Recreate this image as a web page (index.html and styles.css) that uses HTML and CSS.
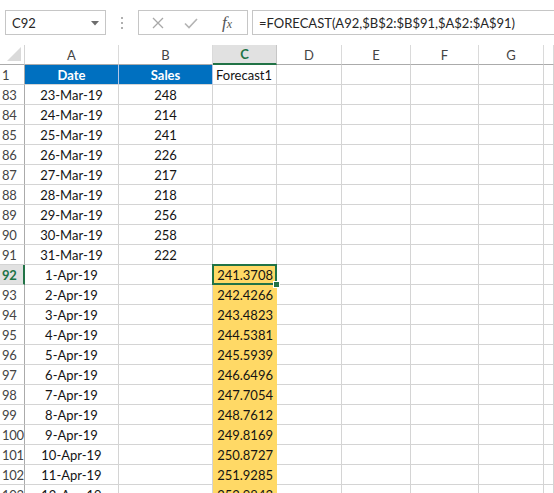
FILE: index.html
```html
<!DOCTYPE html>
<html>
<head>
<meta charset="utf-8">
<link rel="stylesheet" href="styles.css">
</head>
<body>
<div class="app">
  <div class="toolbar">
    <div class="namebox">
      <span class="ref">C92</span>
      <svg class="drop" width="8" height="5" viewBox="0 0 8 5"><path d="M0 0H8L4 4.5Z" fill="#6d6d6d"/></svg>
    </div>
    <svg class="grip" width="3" height="14" viewBox="0 0 3 14"><rect x="0" y="1" width="2" height="2" fill="#b0b0b0"/><rect x="0" y="6" width="2" height="2" fill="#b0b0b0"/><rect x="0" y="11" width="2" height="2" fill="#b0b0b0"/></svg>
    <div class="fbtns">
      <svg class="ic" width="12" height="12" viewBox="0 0 12 12"><path d="M1 1L11 11M11 1L1 11" stroke="#a8a8a8" stroke-width="1.3"/></svg>
      <svg class="ic" width="14" height="12" viewBox="0 0 14 12"><path d="M1 6.5L5 10.5L13 2" stroke="#b4b4b4" stroke-width="1.6" fill="none"/></svg>
      <span class="fx">f<span class="x">x</span></span>
    </div>
    <div class="formula">=FORECAST(A92,$B$2:$B$91,$A$2:$A$91)</div>
  </div>
  <div class="grid">
    <div class="cell corner"><svg width="14" height="14" viewBox="0 0 14 14"><path d="M14 0V14H0Z" fill="#dadada"/></svg></div>
    <div class="cell ch">A</div>
    <div class="cell ch">B</div>
    <div class="cell ch sel">C</div>
    <div class="cell ch">D</div>
    <div class="cell ch">E</div>
    <div class="cell ch">F</div>
    <div class="cell ch">G</div>
    <div class="cell ch"></div>

    <div class="cell rh">1</div>
    <div class="cell hd">Date</div>
    <div class="cell hd">Sales</div>
    <div class="cell left">Forecast1</div>
    <div class="cell"></div><div class="cell"></div><div class="cell"></div><div class="cell"></div><div class="cell"></div>

    <div class="cell rh">83</div><div class="cell c">23-Mar-19</div><div class="cell c">248</div><div class="cell"></div><div class="cell"></div><div class="cell"></div><div class="cell"></div><div class="cell"></div><div class="cell"></div>
    <div class="cell rh">84</div><div class="cell c">24-Mar-19</div><div class="cell c">214</div><div class="cell"></div><div class="cell"></div><div class="cell"></div><div class="cell"></div><div class="cell"></div><div class="cell"></div>
    <div class="cell rh">85</div><div class="cell c">25-Mar-19</div><div class="cell c">241</div><div class="cell"></div><div class="cell"></div><div class="cell"></div><div class="cell"></div><div class="cell"></div><div class="cell"></div>
    <div class="cell rh">86</div><div class="cell c">26-Mar-19</div><div class="cell c">226</div><div class="cell"></div><div class="cell"></div><div class="cell"></div><div class="cell"></div><div class="cell"></div><div class="cell"></div>
    <div class="cell rh">87</div><div class="cell c">27-Mar-19</div><div class="cell c">217</div><div class="cell"></div><div class="cell"></div><div class="cell"></div><div class="cell"></div><div class="cell"></div><div class="cell"></div>
    <div class="cell rh">88</div><div class="cell c">28-Mar-19</div><div class="cell c">218</div><div class="cell"></div><div class="cell"></div><div class="cell"></div><div class="cell"></div><div class="cell"></div><div class="cell"></div>
    <div class="cell rh">89</div><div class="cell c">29-Mar-19</div><div class="cell c">256</div><div class="cell"></div><div class="cell"></div><div class="cell"></div><div class="cell"></div><div class="cell"></div><div class="cell"></div>
    <div class="cell rh">90</div><div class="cell c">30-Mar-19</div><div class="cell c">258</div><div class="cell"></div><div class="cell"></div><div class="cell"></div><div class="cell"></div><div class="cell"></div><div class="cell"></div>
    <div class="cell rh">91</div><div class="cell c">31-Mar-19</div><div class="cell c">222</div><div class="cell"></div><div class="cell"></div><div class="cell"></div><div class="cell"></div><div class="cell"></div><div class="cell"></div>

    <div class="cell rh rsel">92</div><div class="cell c">1-Apr-19</div><div class="cell"></div><div class="cell fc active">241.3708</div><div class="cell"></div><div class="cell"></div><div class="cell"></div><div class="cell"></div><div class="cell"></div>
    <div class="cell rh">93</div><div class="cell c">2-Apr-19</div><div class="cell"></div><div class="cell fc">242.4266</div><div class="cell"></div><div class="cell"></div><div class="cell"></div><div class="cell"></div><div class="cell"></div>
    <div class="cell rh">94</div><div class="cell c">3-Apr-19</div><div class="cell"></div><div class="cell fc">243.4823</div><div class="cell"></div><div class="cell"></div><div class="cell"></div><div class="cell"></div><div class="cell"></div>
    <div class="cell rh">95</div><div class="cell c">4-Apr-19</div><div class="cell"></div><div class="cell fc">244.5381</div><div class="cell"></div><div class="cell"></div><div class="cell"></div><div class="cell"></div><div class="cell"></div>
    <div class="cell rh">96</div><div class="cell c">5-Apr-19</div><div class="cell"></div><div class="cell fc">245.5939</div><div class="cell"></div><div class="cell"></div><div class="cell"></div><div class="cell"></div><div class="cell"></div>
    <div class="cell rh">97</div><div class="cell c">6-Apr-19</div><div class="cell"></div><div class="cell fc">246.6496</div><div class="cell"></div><div class="cell"></div><div class="cell"></div><div class="cell"></div><div class="cell"></div>
    <div class="cell rh">98</div><div class="cell c">7-Apr-19</div><div class="cell"></div><div class="cell fc">247.7054</div><div class="cell"></div><div class="cell"></div><div class="cell"></div><div class="cell"></div><div class="cell"></div>
    <div class="cell rh">99</div><div class="cell c">8-Apr-19</div><div class="cell"></div><div class="cell fc">248.7612</div><div class="cell"></div><div class="cell"></div><div class="cell"></div><div class="cell"></div><div class="cell"></div>
    <div class="cell rh">100</div><div class="cell c">9-Apr-19</div><div class="cell"></div><div class="cell fc">249.8169</div><div class="cell"></div><div class="cell"></div><div class="cell"></div><div class="cell"></div><div class="cell"></div>
    <div class="cell rh">101</div><div class="cell c">10-Apr-19</div><div class="cell"></div><div class="cell fc">250.8727</div><div class="cell"></div><div class="cell"></div><div class="cell"></div><div class="cell"></div><div class="cell"></div>
    <div class="cell rh">102</div><div class="cell c">11-Apr-19</div><div class="cell"></div><div class="cell fc">251.9285</div><div class="cell"></div><div class="cell"></div><div class="cell"></div><div class="cell"></div><div class="cell"></div>
    <div class="cell rh">103</div><div class="cell c">12-Apr-19</div><div class="cell"></div><div class="cell fc">252.9843</div><div class="cell"></div><div class="cell"></div><div class="cell"></div><div class="cell"></div><div class="cell"></div>
  </div>
</div>
</body>
</html>
```

FILE: styles.css
```css
html, body {
  margin: 0;
  padding: 0;
  background: #ffffff;
}
body {
  width: 554px;
  height: 493px;
  overflow: hidden;
  font-family: Lato, "Liberation Sans", sans-serif;
  font-size: 13px;
  color: #141414;
}
.app {
  display: flex;
  flex-direction: column;
  width: 554px;
  height: 493px;
  overflow: hidden;
}
.toolbar {
  height: 45px;
  flex: none;
  display: flex;
  align-items: flex-start;
  padding-top: 10px;
  padding-left: 5px;
  box-sizing: border-box;
}
.namebox {
  width: 101px;
  height: 25px;
  box-sizing: border-box;
  border: 1px solid #c6c6c6;
  display: flex;
  align-items: center;
  justify-content: space-between;
  padding: 0 6px 0 6px;
  font-size: 13px;
  color: #262626;
}
.drop { margin-top: 1px; }
.grip {
  margin: 6px 0 0 15px;
}
.fbtns {
  margin-left: 14px;
  width: 110px;
  height: 25px;
  box-sizing: border-box;
  border: 1px solid #c6c6c6;
  display: flex;
  align-items: center;
  padding-left: 13px;
  gap: 22px;
}
.fbtns .ic:nth-child(2) { margin-left: -2px; }
.fx {
  font-family: "Liberation Serif", serif;
  font-style: italic;
  font-size: 17px;
  color: #555;
  margin-left: 2px;
  line-height: 1;
}
.fx .x { font-size: 12px; }
.formula {
  margin-left: 4px;
  flex: 1;
  height: 25px;
  box-sizing: border-box;
  border: 1px solid #c6c6c6;
  border-right: none;
  display: flex;
  align-items: center;
  padding-left: 6px;
  font-size: 13px;
  color: #262626;
  white-space: nowrap;
}
.grid {
  display: grid;
  grid-template-columns: 25px 94px 94px 64px 65px 69px 68px 65px 10px;
  grid-auto-rows: 20px;
  width: 554px;
  overflow: hidden;
}
.cell {
  box-sizing: border-box;
  border-right: 1px solid #d4d4d4;
  border-bottom: 1px solid #d4d4d4;
  display: flex;
  align-items: center;
  padding: 0 3px;
  white-space: nowrap;
}
.corner {
  border-right: 1px solid #d4d4d4;
  border-bottom: 1px solid #ababab;
  justify-content: flex-end;
  align-items: flex-end;
  padding: 0 3px 3px 0;
}
.ch {
  justify-content: center;
  color: #444;
  border-bottom: 1px solid #ababab;
  border-right: 1px solid #dadada;
}
.ch.sel {
  background: #e1e1e1;
  color: #217346;
  font-weight: bold;
  border-bottom: 2px solid #217346;
  border-right: 1px solid #c6c6c6;
}
.rh {
  color: #444;
  border-right: 1px solid #ababab;
  padding: 0 0 0 2px;
  letter-spacing: -0.3px;
}
.rh.rsel {
  background: #e1e1e1;
  color: #217346;
  font-weight: bold;
  border-right: 2px solid #217346;
}
.hd {
  background: #0070c0;
  color: #ffffff;
  font-weight: bold;
  justify-content: center;
  border-right: 1px solid #b4c6e7;
  border-bottom: 1px solid #d4d4d4;
}
.c { justify-content: center; }
.left { justify-content: flex-start; }
.fc {
  background: #ffd966;
  justify-content: flex-end;
  border-right-color: #ffd966;
  border-bottom-color: #ffd966;
}
.active {
  position: relative;
}
.active::before {
  content: "";
  position: absolute;
  left: -1px;
  top: -1px;
  right: -1px;
  bottom: -1px;
  border: 2px solid #217346;
}
.active::after {
  content: "";
  position: absolute;
  right: -4px;
  bottom: -4px;
  width: 5px;
  height: 5px;
  background: #217346;
  border: 1px solid #ffffff;
}
```
